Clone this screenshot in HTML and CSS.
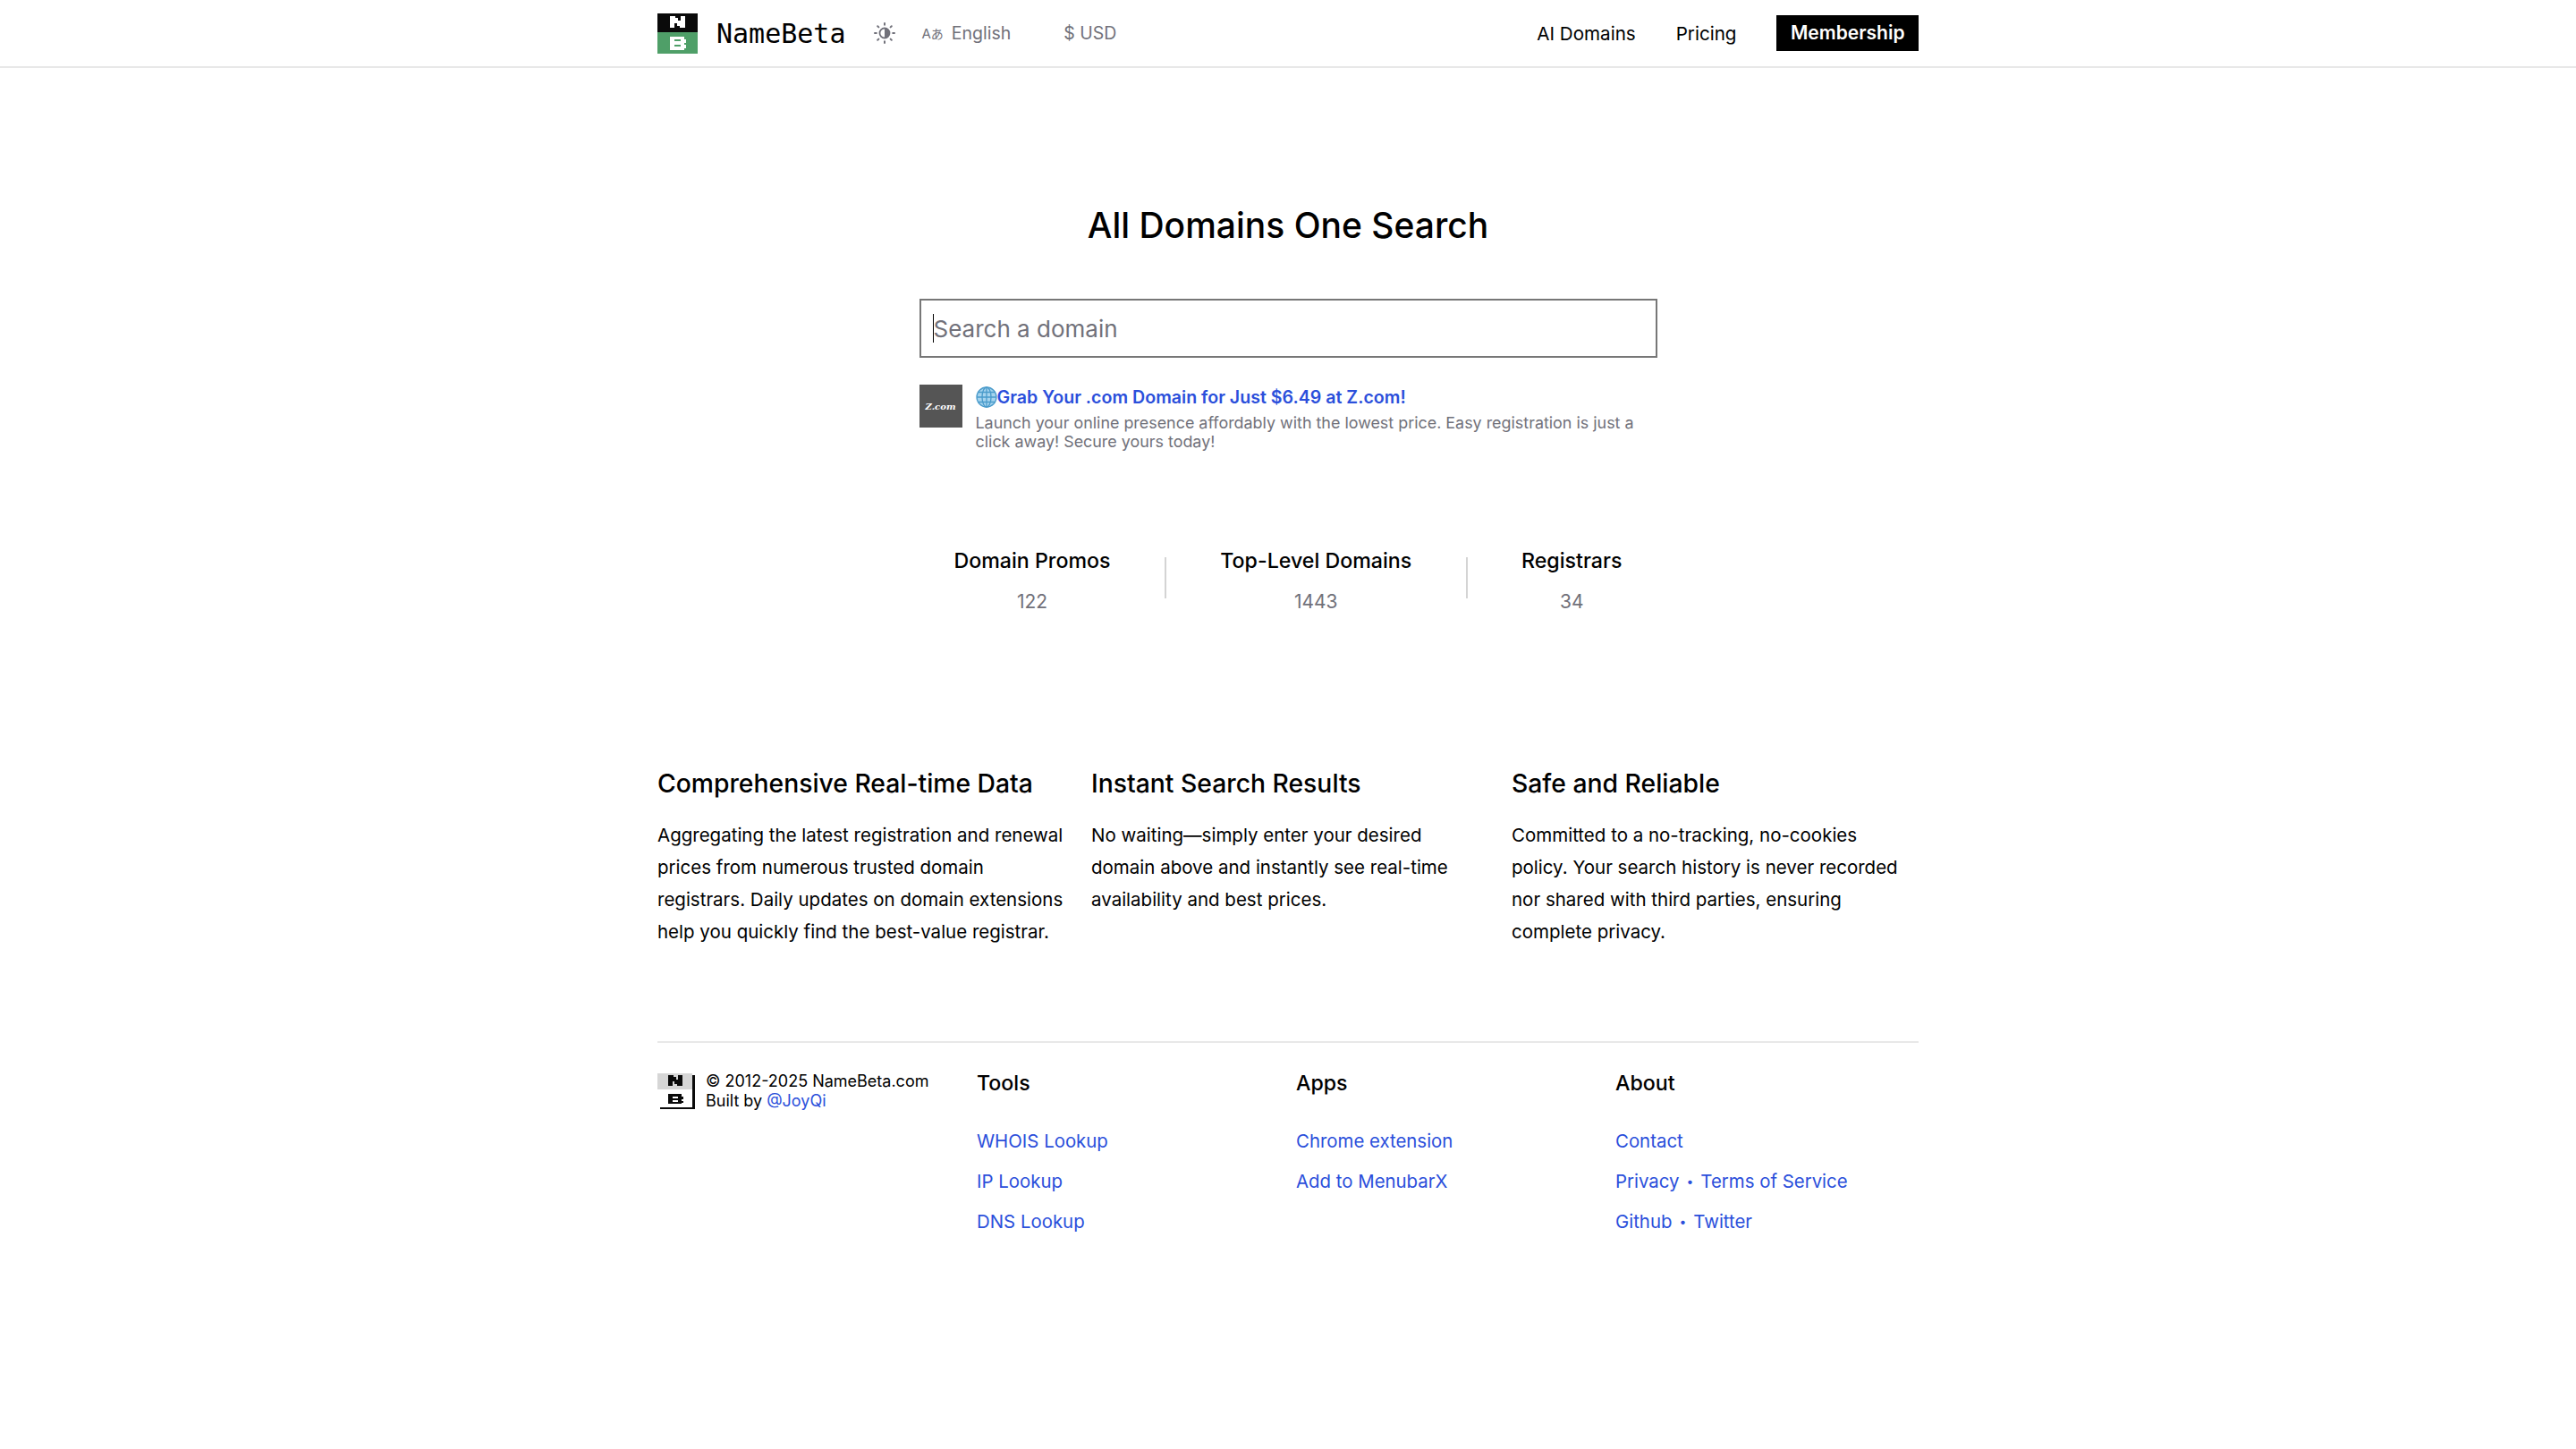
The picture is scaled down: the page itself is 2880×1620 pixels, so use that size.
FILE: index.html
```html
<!DOCTYPE html>
<html lang="en">
<head>
    <meta charset="UTF-8">
    <meta name="viewport" content="width=device-width, initial-scale=1.0">
    <title>NameBeta</title>
    <link rel="stylesheet" href="styles.css">
</head>
<body>
    <header class="topbar">
        <div class="wrap topbar-inner">
            <div class="topbar-left">
                <a class="brand" href="#">
                    <svg class="brand-logo" viewBox="0 0 45 45" shape-rendering="crispEdges">
                        <rect width="45" height="21" fill="#0a0a0a"/>
                        <rect y="21" width="45" height="24" fill="#4f9f68"/>
                        <path fill="#fff" d="M14 3h6v2h3v3h3V3h5v13h-6v-2h-3v-3h-3v5h-5z"/>
                        <path fill="#fff" fill-rule="evenodd" d="M14 26h16v3h2v4h-2v2h2v4h-2v2H14zM19 29v2h7v-2zM19 35v2h7v-2z"/>
                    </svg>
                    <span class="brand-name">NameBeta</span>
                </a>
                <svg class="sun-icon" viewBox="0 0 24 24">
                    <circle cx="12" cy="12" r="5.500" fill="none" stroke="#71717a" stroke-width="1.800"/>
                    <path d="M12 6.500a5.500 5.500 0 0 1 0 11z" fill="#71717a"/>
                    <path d="M12 1v1.800M12 21.200V23M1 12h1.800M21.200 12H23M4.200 4.200l1.200 1.200M18.600 18.600l1.200 1.200M4.200 19.800l1.200-1.200M18.600 5.400l1.200-1.200" stroke="#71717a" stroke-width="2" stroke-linecap="round"/>
                </svg>
                <div class="lang">
                    <span class="lang-glyph">A<span class="lang-kana">あ</span></span>
                    <span>English</span>
                </div>
                <div class="currency">$ USD</div>
            </div>
            <nav class="topnav">
                <a href="#">AI Domains</a>
                <a href="#">Pricing</a>
                <a class="member-btn" href="#">Membership</a>
            </nav>
        </div>
    </header>

    <main class="wrap">
        <section class="hero">
            <h1>All Domains One Search</h1>
            <div class="search">
                <input class="search-box" type="text" placeholder="Search a domain">
            </div>
            <div class="promo">
                <div class="promo-thumb">Z.com</div>
                <div class="promo-body">
                    <a class="promo-title" href="#">
                        <svg class="globe" viewBox="0 0 24 24">
                            <circle cx="12" cy="12" r="11" fill="#a6d4ee"/>
                            <g fill="none" stroke="#4a9bcb" stroke-width="1.300">
                                <circle cx="12" cy="12" r="11"/>
                                <ellipse cx="12" cy="12" rx="5" ry="11"/>
                                <path d="M12 1v22M1 12h22M3 6.500h18M3 17.500h18"/>
                            </g>
                        </svg>Grab Your .com Domain for Just $6.49 at Z.com!</a>
                    <p>Launch your online presence affordably with the lowest price. Easy registration is just a click away! Secure yours today!</p>
                </div>
            </div>
            <div class="stats">
                <div class="stat">
                    <div class="stat-label">Domain Promos</div>
                    <div class="stat-value">122</div>
                </div>
                <div class="stat-line"></div>
                <div class="stat">
                    <div class="stat-label">Top-Level Domains</div>
                    <div class="stat-value">1443</div>
                </div>
                <div class="stat-line"></div>
                <div class="stat">
                    <div class="stat-label">Registrars</div>
                    <div class="stat-value">34</div>
                </div>
            </div>
        </section>

        <section class="features">
            <div>
                <h2>Comprehensive Real-time Data</h2>
                <p>Aggregating the latest registration and renewal prices from numerous trusted domain registrars. Daily updates on domain extensions help you quickly find the best-value registrar.</p>
            </div>
            <div>
                <h2>Instant Search Results</h2>
                <p>No waiting—simply enter your desired domain above and instantly see real-time availability and best prices.</p>
            </div>
            <div>
                <h2>Safe and Reliable</h2>
                <p>Committed to a no-tracking, no-cookies policy. Your search history is never recorded nor shared with third parties, ensuring complete privacy.</p>
            </div>
        </section>

        <footer class="footer">
            <div class="footer-brand">
                <svg class="footer-logo" viewBox="0 0 42 40" shape-rendering="crispEdges">
                    <rect width="39" height="18" fill="#d6d6d6"/>
                    <rect x="39" y="2" width="3" height="38" fill="#0a0a0a"/>
                    <rect x="3" y="38" width="39" height="2" fill="#0a0a0a"/>
                    <path fill="#0a0a0a" d="M12 2h6v2h3v3h2V2h5v12h-6v-2h-3V9h-2v5h-5z"/>
                    <path fill="#0a0a0a" fill-rule="evenodd" d="M12 23h15v3h2v3h-2v2h2v2h-2v1H12zM17 26v2h6v-2zM17 30v2h6v-2z"/>
                </svg>
                <div class="footer-copy">
                    <div>© 2012-2025 NameBeta.com</div>
                    <div>Built by <a href="#">@JoyQi</a></div>
                </div>
            </div>
            <div class="footer-col">
                <h3>Tools</h3>
                <a href="#">WHOIS Lookup</a>
                <a href="#">IP Lookup</a>
                <a href="#">DNS Lookup</a>
            </div>
            <div class="footer-col">
                <h3>Apps</h3>
                <a href="#">Chrome extension</a>
                <a href="#">Add to MenubarX</a>
            </div>
            <div class="footer-col">
                <h3>About</h3>
                <a href="#">Contact</a>
                <div class="link-row"><a href="#">Privacy</a><span>•</span><a href="#">Terms of Service</a></div>
                <div class="link-row"><a href="#">Github</a><span>•</span><a href="#">Twitter</a></div>
            </div>
        </footer>
    </main>
</body>
</html>
```

FILE: styles.css
```css
* {
    box-sizing: border-box;
}
body {
    margin: 0;
    background: #fff;
    color: #000;
    font-family: Inter, "Noto Sans CJK JP", sans-serif;
    font-size: 20px;
}
a {
    color: inherit;
    text-decoration: none;
}
h1, h2, h3, p {
    margin: 0;
}
.wrap {
    width: 1410px;
    margin: 0 auto;
}

/* top bar */
.topbar {
    height: 76px;
    border-bottom: 2px solid #e8e8e8;
}
.topbar-inner {
    height: 74px;
    display: flex;
    justify-content: space-between;
    align-items: center;
}
.topbar-left {
    display: flex;
    align-items: center;
}
.brand {
    display: flex;
    align-items: center;
    gap: 21px;
}
.brand-logo {
    width: 45px;
    height: 45px;
    display: block;
}
.brand-name {
    font-family: "DejaVu Sans Mono", monospace;
    font-size: 30px;
}
.sun-icon {
    width: 24px;
    height: 24px;
    margin-left: 31px;
}
.lang {
    display: flex;
    align-items: center;
    gap: 9px;
    margin-left: 30px;
    color: #71717a;
    font-size: 19.500px;
}
.lang-glyph {
    font-size: 15px;
}
.lang-kana {
    font-size: 14px;
}
.currency {
    margin-left: 59px;
    color: #71717a;
    font-size: 19.500px;
}
.topnav {
    display: flex;
    align-items: center;
    gap: 45px;
    font-size: 20.600px;
}
.member-btn {
    padding: 0 15.500px;
    height: 40px;
    line-height: 40px;
    background: #000;
    color: #fff;
    font-size: 21px;
    font-weight: 600;
}

/* hero */
.hero {
    display: flex;
    flex-direction: column;
    align-items: center;
}
h1 {
    margin-top: 150px;
    font-size: 39px;
    line-height: 52px;
    font-weight: 500;
}
.search {
    position: relative;
    margin-top: 56px;
}
/* text caret shown in the focused field */
.search::after {
    content: "";
    position: absolute;
    left: 15px;
    top: 17px;
    width: 1px;
    height: 32px;
    background: #000;
}
.search-box {
    display: block;
    width: 825px;
    height: 66px;
    padding: 0 14px;
    border: 2px solid #777;
    outline: none;
    border-radius: 0;
    font-family: inherit;
    font-size: 26px;
}
.search-box::placeholder {
    color: #71717a;
    opacity: 1;
}
.promo {
    width: 825px;
    margin-top: 30px;
    display: flex;
    gap: 15px;
}
.promo-thumb {
    width: 48px;
    height: 48px;
    flex: none;
    background: #555;
    color: #fff;
    font-family: "DejaVu Serif", serif;
    font-size: 10px;
    font-weight: 700;
    font-style: italic;
    display: flex;
    align-items: center;
    justify-content: center;
}
.promo-body {
    padding-top: 2px;
}
.promo-title {
    display: flex;
    align-items: center;
    color: #2b4fdb;
    font-size: 19.600px;
    line-height: 24px;
    font-weight: 600;
}
.globe {
    width: 24px;
    height: 24px;
}
.promo-body p {
    margin-top: 6px;
    color: #71717a;
    font-size: 17.900px;
    line-height: 21px;
}

/* stats */
.stats {
    width: 825px;
    padding: 0 39px;
    display: flex;
    align-items: flex-start;
    justify-content: space-between;
    margin-top: 105px;
}
.stat {
    text-align: center;
}
.stat-label {
    font-size: 23.200px;
    line-height: 36px;
    font-weight: 500;
}
.stat-value {
    margin-top: 10px;
    color: #71717a;
    font-size: 21px;
    line-height: 36px;
}
.stat-line {
    width: 2px;
    height: 46px;
    margin-top: 14px;
    background: #d4d4d4;
}

/* features */
.features {
    display: grid;
    grid-template-columns: 455px 440px 440px;
    gap: 30px;
    margin-top: 165px;
}
h2 {
    font-size: 28.300px;
    line-height: 40px;
    font-weight: 500;
}
.features p {
    margin-top: 20px;
    font-size: 20.500px;
    line-height: 36px;
}

/* footer */
.footer {
    display: grid;
    grid-template-columns: repeat(4, 1fr);
    gap: 18px;
    margin-top: 104px;
    padding-top: 32px;
    border-top: 2px solid #e8e8e8;
}
.footer-brand {
    display: flex;
    gap: 12px;
}
.footer-logo {
    width: 42px;
    height: 40px;
    margin-top: 2px;
    flex: none;
}
.footer-copy {
    font-size: 18px;
    line-height: 22px;
}
.footer-copy a,
.footer-col a,
.link-row span {
    color: #2b4fdb;
}
.footer-col {
    display: flex;
    flex-direction: column;
    align-items: flex-start;
    gap: 15px;
    font-size: 20.400px;
    line-height: 30px;
}
.footer-col h3 {
    margin-bottom: 22px;
    font-size: 23.200px;
    line-height: 26px;
    font-weight: 500;
}
.link-row {
    display: flex;
    gap: 8px;
}
.link-row span {
    font-size: 14px;
}
```
